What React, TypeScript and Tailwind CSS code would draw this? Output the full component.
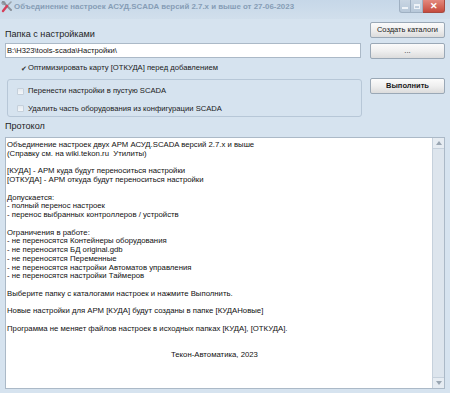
import React from "react";

const lines: string[] = [
  "Объединение настроек двух АРМ АСУД.SCADA версий 2.7.x и выше",
  "(Справку см. на wiki.tekon.ru  Утилиты)",
  "",
  "[КУДА] - АРМ куда будут переноситься настройки",
  "[ОТКУДА] - АРМ откуда будут переноситься настройки",
  "",
  "Допускается:",
  "- полный перенос настроек",
  "- перенос выбранных контроллеров / устройств",
  "",
  "Ограничения в работе:",
  "- не переносятся Контейнеры оборудования",
  "- не переносится БД original.gdb",
  "- не переносятся Переменные",
  "- не переносятся настройки Автоматов управления",
  "- не переносятся настройки Таймеров",
  "",
  "Выберите папку с каталогами настроек и нажмите Выполнить.",
  "",
  "Новые настройки для АРМ [КУДА] будут созданы в папке [КУДАНовые]",
  "",
  "Программа не меняет файлов настроек в исходных папках [КУДА], [ОТКУДА].",
  "",
  "",
];

function Btn({ children, bold }: { children: React.ReactNode; bold?: boolean }) {
  return (
    <div
      className={
        "h-[16px] w-[75px] flex items-center justify-center rounded-[2px] border border-[#9aa8b6] bg-gradient-to-b from-[#fbfbfb] via-[#efefef] to-[#dcdcdc] text-[7.5px] text-[#1a1a1a] " +
        (bold ? "font-bold" : "")
      }
    >
      {children}
    </div>
  );
}

function Box() {
  return (
    <div className="w-[7px] h-[7px] rounded-[1px] border border-[#c5d0db] bg-gradient-to-b from-[#e4eaf0] to-[#f4f7fa]" />
  );
}

export default function App() {
  return (
    <div
      className="w-[450px] h-[393px] bg-[#d6e3ef] flex flex-col overflow-hidden"
      style={{ fontFamily: '"Liberation Sans", Arial, sans-serif' }}
    >
      {/* Title bar */}
      <div className="h-[19px] flex items-start bg-gradient-to-b from-[#c6d7e8] to-[#d1dfec]">
        <div className="h-[14px] flex items-center pl-[1px]">
          <svg width="12" height="12" viewBox="0 0 12 12">
            <path d="M2 1 L10 9" stroke="#8a8f98" strokeWidth="2" strokeLinecap="round" />
            <path d="M10 1 L7 4" stroke="#9aa3ad" strokeWidth="1.6" strokeLinecap="round" />
            <path d="M6 5 L2 10" stroke="#d6405a" strokeWidth="2.4" strokeLinecap="round" />
            <circle cx="2.5" cy="2" r="1.6" fill="none" stroke="#8a8f98" strokeWidth="1" />
          </svg>
        </div>
        <div className="h-[14px] flex items-center ml-[1px] text-[7.9px] font-bold text-[#869db6] whitespace-nowrap">
          Объединение настроек АСУД.SCADA версий 2.7.x и выше от 27-06-2023
        </div>
        <div className="flex-1" />
        <div className="flex h-[13px] mr-[5px]">
          <div className="w-[12px] h-[13px] rounded-bl-[3px] border border-t-0 border-[#9fb0c2] bg-gradient-to-b from-[#c9d6e3] to-[#b7c8d9] flex items-center justify-center">
            <div className="w-[6px] h-[2px] bg-[#eef3f8] mt-[3px]" />
          </div>
          <div className="w-[12px] h-[13px] border border-t-0 border-l-0 border-[#9fb0c2] bg-gradient-to-b from-[#c9d6e3] to-[#b7c8d9] flex items-center justify-center">
            <div className="w-[6px] h-[5px] border border-[#eef3f8] border-t-2" />
          </div>
          <div className="w-[22px] h-[13px] rounded-br-[3px] border border-t-0 border-l-0 border-[#a84a40] bg-gradient-to-b from-[#e3897e] to-[#c54a3d] flex items-center justify-center text-white text-[9px] font-bold leading-none">
            ✕
          </div>
        </div>
      </div>

      {/* Top section */}
      <div className="flex pl-[5px]">
        <div className="w-[356px] flex flex-col">
          <div className="mt-[10px] h-[11px] leading-[11px] text-[9.1px] text-[#1e1e1e]">Папка с настройками</div>
          <div className="mt-[3px] h-[15px] border border-[#abb9c7] bg-white flex items-center pl-[1px] text-[7.6px] text-[#111]">
            B:\Н323\tools-scada\Настройки\
          </div>
          <div className="mt-[5px] h-[10px] flex items-center text-[7.65px] text-[#1a1a1a]">
            <div className="ml-[12px] w-[10px] flex items-center justify-end text-[7px] text-[#333] leading-none">✔</div>
            <div className="ml-[1px]">Оптимизировать карту [ОТКУДА] перед добавлением</div>
          </div>
          <div className="mt-[6px] ml-[2px] mr-[-1px] h-[38px] rounded-[3px] border border-[#b7c7d7] flex flex-col pt-[6px] gap-[7.7px] text-[7.65px] text-[#1a1a1a]">
            <div className="h-[10px] flex items-center">
              <div className="ml-[9px]"><Box /></div>
              <div className="ml-[4px]">Перенести настройки в пустую SCADA</div>
            </div>
            <div className="h-[10px] flex items-center">
              <div className="ml-[9px]"><Box /></div>
              <div className="ml-[4px]">Удалить часть оборудования из конфигурации SCADA</div>
            </div>
          </div>
        </div>
        <div className="ml-[9px] flex flex-col pt-[3px]">
          <Btn>Создать каталоги</Btn>
          <div className="mt-[5px]"><Btn>...</Btn></div>
          <div className="mt-[19px]"><Btn bold>Выполнить</Btn></div>
        </div>
      </div>

      {/* Protocol */}
      <div className="pl-[5px] mt-[4px] h-[11px] leading-[11px] text-[9.1px] text-[#1e1e1e]">Протокол</div>
      <div className="ml-[5px] mt-[5px] w-[440px] h-[252px] border border-[#abb9c7] bg-white flex">
        <div className="flex-1 pl-[1px] pt-[3px] text-[7.75px] text-[#111] leading-[8.75px]">
          {lines.map((l, i) => (
            <div key={i} className="h-[8.75px] whitespace-pre">
              {l}
            </div>
          ))}
          <div className="h-[8.75px] whitespace-pre pl-[164px]">Текон-Автоматика, 2023</div>
        </div>
        <div className="w-[12px] flex flex-col bg-[#dde5ed] border-l border-[#c6d1dc]">
          <div className="h-[11px] border-b border-[#c6d1dc] bg-[#e6ecf2] flex items-center justify-center">
            <svg width="6" height="4" viewBox="0 0 6 4">
              <path d="M0 4 L3 0 L6 4 Z" fill="#9aa6b2" />
            </svg>
          </div>
          <div className="flex-1" />
          <div className="h-[11px] border-t border-[#c6d1dc] bg-[#e6ecf2] flex items-center justify-center">
            <svg width="6" height="4" viewBox="0 0 6 4">
              <path d="M0 0 L6 0 L3 4 Z" fill="#9aa6b2" />
            </svg>
          </div>
        </div>
      </div>
    </div>
  );
}
